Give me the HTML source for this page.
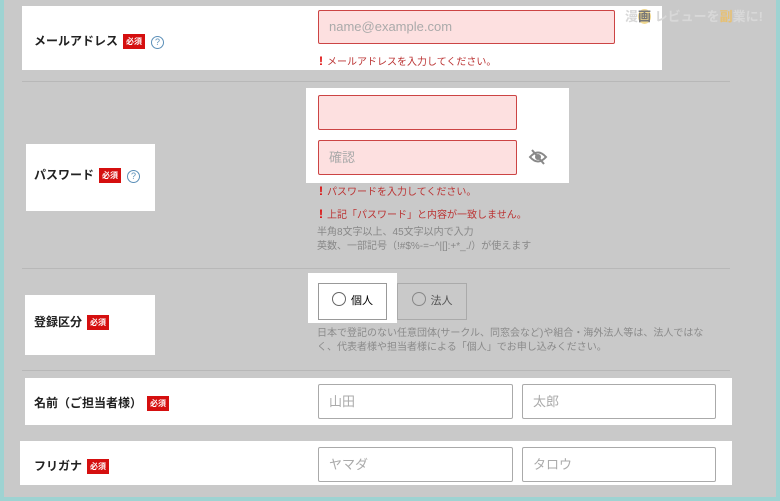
<!DOCTYPE html><html><head><meta charset="utf-8"><style>
body{margin:0;width:780px;height:501px;overflow:hidden;background:#9ed3d2;font-family:"Liberation Sans","Noto Sans CJK JP",sans-serif;}
#f{position:absolute;left:4px;top:0;width:772px;height:497px;background:#c9c9c9;}
.a{position:absolute;}
.w{position:absolute;background:#fff;}
.lab{position:absolute;font-size:12px;font-weight:bold;color:#222;white-space:nowrap;}
.req{display:inline-block;background:#d50f0f;color:#fff;font-size:8px;padding:2px 3px;margin-left:5px;vertical-align:1px;}
.q{display:inline-block;width:11px;height:11px;border:1px solid #5b8fb8;border-radius:50%;color:#5b8fb8;font-size:9px;text-align:center;line-height:11px;margin-left:6px;font-weight:normal;}
.in{position:absolute;box-sizing:border-box;border:1px solid #c44;background:#fde0e0;border-radius:2px;color:#aaa;font-size:13px;padding-left:10px;}
.in2{position:absolute;box-sizing:border-box;border:1px solid #aaa;background:#fff;border-radius:2px;color:#aaa;font-size:13px;padding-left:10px;}
.err{position:absolute;font-size:10px;color:#b33;white-space:nowrap;}
.err b{color:#d00;font-size:12px;margin-right:4px;}
.hint{position:absolute;font-size:10px;color:#888;white-space:nowrap;line-height:14px;}
.sep{position:absolute;left:22px;width:708px;height:1px;background:#b8b8b8;}
.rc{display:inline-block;width:12px;height:12px;border:1px solid #666;border-radius:50%;vertical-align:-2px;margin-right:5px;}
</style></head><body><div id="f"></div>
<div class="w" style="left:22px;top:6px;width:640px;height:64px"></div>
<div class="lab" style="left:34px;top:32px">メールアドレス<span class="req">必須</span><span class="q">?</span></div>
<div class="in" style="left:318px;top:10px;width:297px;height:34px;line-height:32px">name@example.com</div>
<div class="err" style="left:319px;top:53px"><b>!</b>メールアドレスを入力してください。</div>
<div class="a" style="left:625px;top:6px;font-size:13px;color:#d8d8d8;font-weight:bold">漫<span style="background:#f0d890;color:#777;border-radius:50%">画</span> レビューを<span style="color:#e8c070">副</span>業に!</div>
<div class="sep" style="top:81px"></div>
<div class="w" style="left:306px;top:88px;width:263px;height:95px"></div>
<div class="in" style="left:318px;top:95px;width:199px;height:35px"></div>
<div class="in" style="left:318px;top:140px;width:199px;height:35px;line-height:33px">確認</div>
<svg class="a" style="left:528px;top:148px" width="20" height="18" viewBox="0 0 20 18"><path d="M2 9Q10 0 18 9Q10 18 2 9Z" fill="none" stroke="#888" stroke-width="2"/><circle cx="10" cy="9" r="3" fill="#888"/><path d="M4 2L16 16" stroke="#888" stroke-width="2"/></svg>
<div class="w" style="left:26px;top:144px;width:129px;height:67px"></div>
<div class="lab" style="left:34px;top:166px">パスワード<span class="req">必須</span><span class="q">?</span></div>
<div class="err" style="left:319px;top:183px"><b>!</b>パスワードを入力してください。</div>
<div class="err" style="left:319px;top:206px"><b>!</b>上記「パスワード」と内容が一致しません。</div>
<div class="hint" style="left:317px;top:226px">半角8文字以上、45文字以内で入力<br>英数、一部記号（!#$%-=~^|[]:+*_./）が使えます</div>
<div class="sep" style="top:268px"></div>
<div class="w" style="left:308px;top:273px;width:89px;height:50px"></div>
<div class="a" style="left:318px;top:283px;width:69px;height:37px;box-sizing:border-box;border:1px solid #999;background:#fff;font-size:11px;line-height:35px;text-align:center"><span class="rc"></span>個人</div>
<div class="a" style="left:397px;top:283px;width:70px;height:37px;box-sizing:border-box;border:1px solid #aaa;background:#c9c9c9;font-size:11px;line-height:35px;text-align:center;color:#555"><span class="rc" style="border-color:#888"></span>法人</div>
<div class="w" style="left:25px;top:295px;width:130px;height:60px"></div>
<div class="lab" style="left:34px;top:313px">登録区分<span class="req">必須</span></div>
<div class="hint" style="left:317px;top:327px;color:#8a8a8a">日本で登記のない任意団体(サークル、同窓会など)や組合・海外法人等は、法人ではな<br>く、代表者様や担当者様による「個人」でお申し込みください。</div>
<div class="sep" style="top:370px"></div>
<div class="w" style="left:25px;top:378px;width:707px;height:47px"></div>
<div class="lab" style="left:34px;top:394px">名前（ご担当者様）<span class="req">必須</span></div>
<div class="in2" style="left:318px;top:384px;width:195px;height:35px;line-height:33px">山田</div>
<div class="in2" style="left:522px;top:384px;width:194px;height:35px;line-height:33px">太郎</div>
<div class="w" style="left:20px;top:441px;width:712px;height:44px"></div>
<div class="lab" style="left:34px;top:457px">フリガナ<span class="req">必須</span></div>
<div class="in2" style="left:318px;top:447px;width:195px;height:35px;line-height:33px">ヤマダ</div>
<div class="in2" style="left:522px;top:447px;width:194px;height:35px;line-height:33px">タロウ</div>
</body></html>
